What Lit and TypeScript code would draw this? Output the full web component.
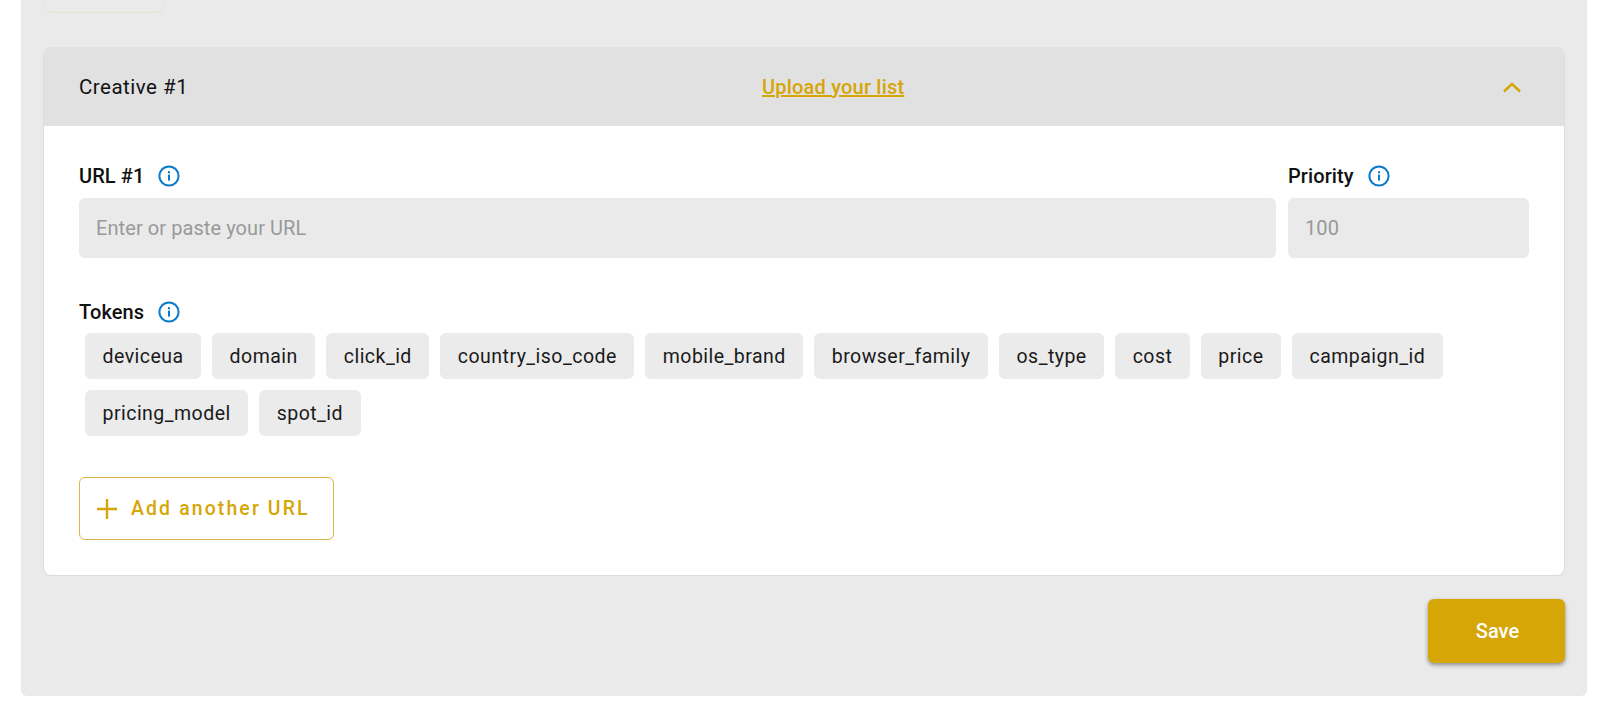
import { LitElement, html, css, svg } from "lit";
import { customElement } from "lit/decorators.js";

const info = svg`<svg class="info" width="22" height="22" viewBox="0 0 22 22" fill="none"><circle cx="11" cy="11" r="9.6" stroke="#0a7acb" stroke-width="2"/><rect x="10" y="9.6" width="2" height="6" fill="#0a7acb"/><rect x="10" y="6.2" width="2" height="2.1" fill="#0a7acb"/></svg>`;

const row = ["deviceua", "domain", "click_id", "country_iso_code", "mobile_brand", "browser_family", "os_type", "cost", "price", "campaign_id", "pricing_model", "spot_id"];

@customElement("app-root")
export class AppRoot extends LitElement {
  static styles = css`
    :host { display: block; height: 707px; background: #fff; font-family: Roboto, "Liberation Sans", sans-serif; color: #111; overflow: hidden; }
    .panel { box-sizing: border-box; margin-left: 21px; width: 1566px; height: 696px; background: #eaeaea; border-radius: 0 0 6px 6px; padding: 0 22px; display: flex; flex-direction: column; }
    .stub { box-sizing: border-box; width: 121px; height: 13px; border: 1px solid #e8e4d2; border-top: none; border-radius: 0 0 6px 6px; flex: none; }
    .card { margin-top: 34px; box-sizing: border-box; height: 529px; background: #fff; border: 1px solid #dcdcdc; border-top: none; border-radius: 8px; overflow: hidden; flex: none; }
    .head { height: 79px; margin: 0 -1px; background: #e1e1e1; display: grid; grid-template-columns: 683px auto 1fr; align-items: center; padding: 0 43px 0 36px; font-size: 20.5px; letter-spacing: 0.5px; }
    .upload { color: #d6a506; text-decoration: underline; font-size: 20px; font-weight: 500; letter-spacing: 0.2px; }
    .chev { justify-self: end; display: block; }
    .body { padding: 36px 35px 0 35px; }
    .fields { display: grid; grid-template-columns: 1197px 241px; column-gap: 12px; }
    .label { display: flex; align-items: center; gap: 14px; height: 28px; font-size: 20px; font-weight: 500; letter-spacing: 0.1px; color: #111; }
    .label .info { flex: none; }
    .input { box-sizing: border-box; margin-top: 8px; height: 60px; background: #eaeaea; border-radius: 6px; display: flex; align-items: center; padding: 0 17px; font-size: 20px; letter-spacing: 0.08px; color: #999; }
    .tokens { margin-top: 40px; }
    .chips { display: flex; flex-wrap: wrap; gap: 11px; padding: 7px 0 0 6px; }
    .chip { height: 46px; box-sizing: border-box; padding: 0 17.5px; background: #ebebeb; border-radius: 6px; display: flex; align-items: center; font-size: 19.5px; letter-spacing: 0.47px; color: #1a1a1a; }
    .add { margin-top: 41px; box-sizing: border-box; width: 255px; height: 63px; border: 1px solid #e0b44a; border-radius: 6px; display: flex; align-items: center; gap: 13px; padding-left: 16px; color: #d6a506; font-size: 19.4px; font-weight: 500; letter-spacing: 2.15px; background: #fff; }
    .foot { display: flex; justify-content: flex-end; margin-top: 23px; }
    .save { box-sizing: border-box; padding-left: 2px; width: 137px; height: 64px; background: #d6a506; border-radius: 6px; color: #fff; font-size: 20px; font-weight: 500; display: flex; align-items: center; justify-content: center; box-shadow: 0 2px 4px rgba(0,0,0,.4); }
  `;

  private chip(t: string) { return html`<span class="chip">${t}</span>`; }

  render() {
    return html`
      <div class="panel">
        <div class="stub"></div>
        <section class="card">
          <header class="head">
            <span>Creative #1</span>
            <span class="upload">Upload your list</span>
            <svg class="chev" width="20" height="12" viewBox="0 0 20 12" fill="none"><path d="M2 10.5 L10 3 L18 10.5" stroke="#d6a506" stroke-width="2.4"/></svg>
          </header>
          <div class="body">
            <div class="fields">
              <div>
                <div class="label">URL #1 ${info}</div>
                <div class="input">Enter or paste your URL</div>
              </div>
              <div>
                <div class="label">Priority ${info}</div>
                <div class="input">100</div>
              </div>
            </div>
            <div class="tokens">
              <div class="label">Tokens ${info}</div>
              <div class="chips">${row.map((t) => this.chip(t))}</div>
            </div>
            <div class="add">
              <svg width="22" height="22" viewBox="0 0 22 22" fill="none"><path d="M1 11 H21 M11 1 V21" stroke="#d6a506" stroke-width="2.4"/></svg>
              <span>Add another URL</span>
            </div>
          </div>
        </section>
        <div class="foot"><div class="save">Save</div></div>
      </div>
    `;
  }
}
